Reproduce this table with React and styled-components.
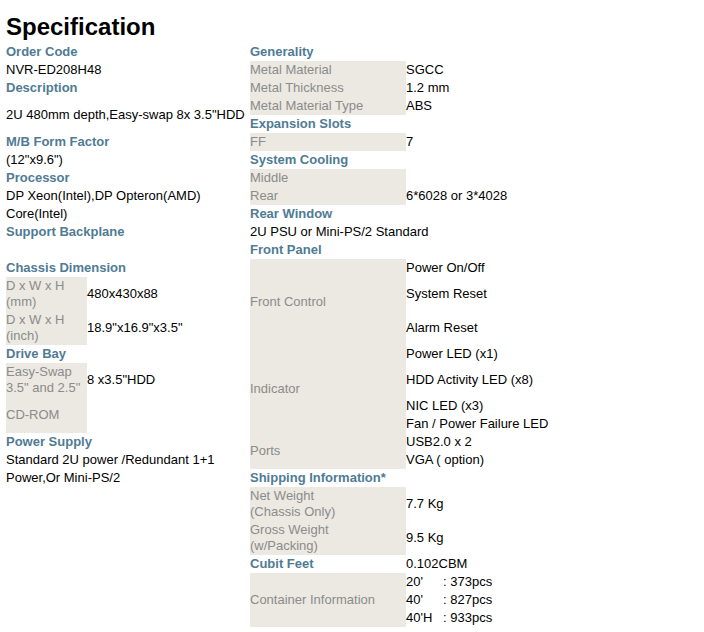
import React from 'react';
import styled, { createGlobalStyle } from 'styled-components';

const GlobalStyle = createGlobalStyle`
  html, body {
    margin: 0;
    padding: 0;
    background: #ffffff;
  }
  body {
    font-family: "Liberation Sans", Arial, sans-serif;
    font-size: 13px;
    color: #000000;
  }
`;

const Page = styled.div`
  width: 704px;
  padding: 13px 0 0 6px;
  box-sizing: border-box;
`;

const Title = styled.h1`
  margin: 0 0 2px;
  font-size: 24px;
  line-height: 28px;
  font-weight: bold;
  color: #000000;
`;

const Columns = styled.div`
  display: grid;
  grid-template-columns: 244px 1fr;
`;

const Column = styled.div`
  display: flex;
  flex-direction: column;
`;

const Heading = styled.div`
  font-size: 13px;
  font-weight: bold;
  line-height: 18px;
  color: #4f7b94;
  white-space: nowrap;
`;

const Text = styled.div`
  line-height: 18px;
  padding: ${(p) => p.$pad || '0'};
  white-space: nowrap;
`;

const Spacer = styled.div`
  height: ${(p) => p.$h}px;
`;

// label cell (grey) + value cell
const SpecRow = styled.div`
  display: grid;
  grid-template-columns: ${(p) => p.$label}px 1fr;
  min-height: ${(p) => p.$h || 18}px;
`;

const Label = styled.div`
  display: flex;
  align-items: center;
  background: #ebe9e2;
  color: #8b8b8b;
  line-height: 16px;
  padding: 1px 0;
`;

const Value = styled.div`
  align-self: ${(p) => (p.$top ? 'start' : 'center')};
  line-height: 18px;
  padding-bottom: ${(p) => p.$bottom || 0}px;
  white-space: nowrap;
`;

const Line = styled.div`
  margin-top: ${(p) => p.$gap || 0}px;
`;

const Port = styled.span`
  display: inline-block;
  width: 37px;
`;

const left = 81;
const right = 156;

const containers = [
  ["20'", ': 373pcs'],
  ["40'", ': 827pcs'],
  ["40'H", ': 933pcs'],
];

const App = () => {
  return (
    <>
      <GlobalStyle />
      <Page>
        <Title>Specification</Title>
        <Columns>
          <Column>
            <Heading>Order Code</Heading>
            <Text>NVR-ED208H48</Text>
            <Heading>Description</Heading>
            <Text $pad='9px 0'>2U 480mm depth,Easy-swap 8x 3.5"HDD</Text>
            <Heading>M/B Form Factor</Heading>
            <Text>(12"x9.6")</Text>
            <Heading>Processor</Heading>
            <Text>DP Xeon(Intel),DP Opteron(AMD)</Text>
            <Text>Core(Intel)</Text>
            <Heading>Support Backplane</Heading>
            <Spacer $h={18} />
            <Heading>Chassis Dimension</Heading>
            <SpecRow $label={left}>
              <Label>D x W x H (mm)</Label>
              <Value>480x430x88</Value>
            </SpecRow>
            <SpecRow $label={left}>
              <Label>D x W x H (inch)</Label>
              <Value>18.9"x16.9"x3.5"</Value>
            </SpecRow>
            <Heading>Drive Bay</Heading>
            <SpecRow $label={left}>
              <Label>
                Easy-Swap
                <br />
                3.5" and 2.5"
              </Label>
              <Value>8 x3.5"HDD</Value>
            </SpecRow>
            <SpecRow $label={left} $h={36}>
              <Label>CD-ROM</Label>
              <Value />
            </SpecRow>
            <Heading>Power Supply</Heading>
            <Text>Standard 2U power /Redundant 1+1</Text>
            <Text>Power,Or Mini-PS/2</Text>
          </Column>

          <Column>
            <Heading>Generality</Heading>
            <SpecRow $label={right}>
              <Label>Metal Material</Label>
              <Value>SGCC</Value>
            </SpecRow>
            <SpecRow $label={right}>
              <Label>Metal Thickness</Label>
              <Value>1.2 mm</Value>
            </SpecRow>
            <SpecRow $label={right}>
              <Label>Metal Material Type</Label>
              <Value>ABS</Value>
            </SpecRow>
            <Heading>Expansion Slots</Heading>
            <SpecRow $label={right}>
              <Label>FF</Label>
              <Value>7</Value>
            </SpecRow>
            <Heading>System Cooling</Heading>
            <SpecRow $label={right}>
              <Label>Middle</Label>
              <Value />
            </SpecRow>
            <SpecRow $label={right}>
              <Label>Rear</Label>
              <Value>6*6028 or 3*4028</Value>
            </SpecRow>
            <Heading>Rear Window</Heading>
            <Text>2U PSU or Mini-PS/2 Standard</Text>
            <Heading>Front Panel</Heading>
            <SpecRow $label={right}>
              <Label>Front Control</Label>
              <Value $top $bottom={8}>
                <Line>Power On/Off</Line>
                <Line $gap={8}>System Reset</Line>
                <Line $gap={16}>Alarm Reset</Line>
              </Value>
            </SpecRow>
            <SpecRow $label={right}>
              <Label>Indicator</Label>
              <Value $top>
                <Line>Power LED (x1)</Line>
                <Line $gap={8}>HDD Activity LED (x8)</Line>
                <Line $gap={8}>NIC LED (x3)</Line>
                <Line>Fan / Power Failure LED</Line>
              </Value>
            </SpecRow>
            <SpecRow $label={right}>
              <Label>Ports</Label>
              <Value $top>
                <Line>USB2.0 x 2</Line>
                <Line>VGA ( option)</Line>
              </Value>
            </SpecRow>
            <Heading>Shipping Information*</Heading>
            <SpecRow $label={right}>
              <Label>
                Net Weight
                <br />
                (Chassis Only)
              </Label>
              <Value>7.7 Kg</Value>
            </SpecRow>
            <SpecRow $label={right}>
              <Label>
                Gross Weight
                <br />
                (w/Packing)
              </Label>
              <Value>9.5 Kg</Value>
            </SpecRow>
            <SpecRow $label={right}>
              <Heading>Cubit Feet</Heading>
              <Value>0.102CBM</Value>
            </SpecRow>
            <SpecRow $label={right}>
              <Label>Container Information</Label>
              <Value>
                {containers.map(([size, count]) => (
                  <Line key={size}>
                    <Port>{size}</Port>
                    {count}
                  </Line>
                ))}
              </Value>
            </SpecRow>
          </Column>
        </Columns>
      </Page>
    </>
  );
};

export default App;
